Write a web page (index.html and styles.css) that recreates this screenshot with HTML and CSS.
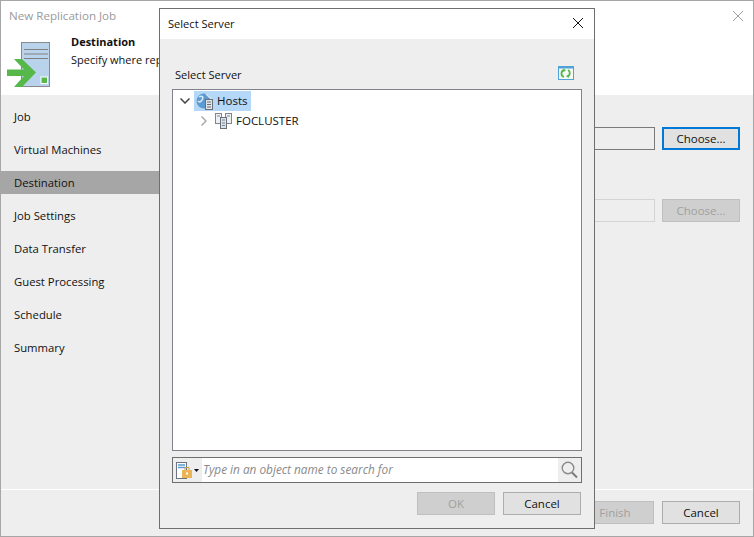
FILE: index.html
```html
<!DOCTYPE html>
<html lang="en">
<head>
<meta charset="utf-8">
<title>New Replication Job</title>
<link rel="stylesheet" href="styles.css">
</head>
<body>
<div class="window">
  <header class="head">
    <div class="title-row">
      <span class="title">New Replication Job</span>
      <svg class="close-x" width="12" height="12" viewBox="0 0 12 12"><path d="M1 1L11 11M11 1L1 11" stroke="#a0a0a0" fill="none"/></svg>
    </div>
    <div class="banner">
      <svg class="logo" width="46" height="48" viewBox="0 0 46 48">
        <rect x="15.5" y="0.5" width="28" height="44" fill="#b9d3ec" stroke="#8a8a8a"/>
        <path d="M18 7.5H42M18 12H42M18 16.5H42" stroke="#808080"/>
        <rect x="35" y="35" width="6.5" height="6.5" fill="#55b848" stroke="#fff"/>
        <path d="M8 17H16L30 30.500L16 45H8L18 34H1V27.500H18Z" fill="#55b848"/>
      </svg>
      <div class="banner-text">
        <div class="banner-title">Destination</div>
        <div class="banner-sub">Specify where replicas should be created</div>
      </div>
    </div>
  </header>
  <div class="body">
    <nav class="nav">
      <div class="nav-item">Job</div>
      <div class="nav-item">Virtual Machines</div>
      <div class="nav-item nav-active">Destination</div>
      <div class="nav-item">Job Settings</div>
      <div class="nav-item">Data Transfer</div>
      <div class="nav-item">Guest Processing</div>
      <div class="nav-item">Schedule</div>
      <div class="nav-item">Summary</div>
    </nav>
    <main class="content">
      <div class="field-row">
        <div class="field"></div>
        <button class="btn btn-focus">Choose...</button>
      </div>
      <div class="field-row field-row-off">
        <div class="field field-off"></div>
        <button class="btn btn-off">Choose...</button>
      </div>
    </main>
  </div>
  <footer class="foot">
    <button class="btn btn-off">Finish</button>
    <button class="btn">Cancel</button>
  </footer>
</div>

<section class="dialog">
  <div class="dlg-head">
    <span class="dlg-title">Select Server</span>
    <svg class="dlg-close" width="12" height="12" viewBox="0 0 12 12"><path d="M1 1L11 11M11 1L1 11" stroke="#111" fill="none"/></svg>
  </div>
  <div class="dlg-body">
    <div class="dlg-label-row">
      <span class="dlg-title">Select Server</span>
      <svg width="16" height="14" viewBox="0 0 16 14">
        <rect x="0.500" y="0.500" width="15" height="13" fill="#f6f8f8" stroke="#4fa3d9"/>
        <path d="M1 1.500H15" stroke="#4fa3d9" stroke-width="2"/>
        <path d="M6.500 4A3.600 3.600 0 0 0 6 11M9.500 10.500A3.600 3.600 0 0 0 10 4" fill="none" stroke="#55b848" stroke-width="1.800"/>
        <path d="M5 2.500L8 4.200L5.500 6ZM11 12L8 10.200L10.500 8.500Z" fill="#55b848"/>
      </svg>
    </div>
    <div class="tree">
      <div class="tree-row">
        <svg class="chev" width="10" height="6" viewBox="0 0 10 6"><path d="M.5.5L5 5L9.500.5" fill="none" stroke="#444" stroke-width="1.500"/></svg>
        <span class="tree-sel">
          <svg width="18" height="18" viewBox="0 0 18 18">
            <circle cx="8" cy="9" r="7.500" fill="#5b9bd0"/>
            <path d="M3 5C6 3 8 5 6 8S3 10 2 9M10 2C12 4 14 5 15 7" fill="none" stroke="#d7e8f6" stroke-width="1.500"/>
            <rect x="9.500" y="7.500" width="7" height="10" fill="#dfe5ea" stroke="#6b6f75"/>
            <path d="M11 10H15M11 12.500H15M11 15H15" stroke="#6b6f75"/>
          </svg>
          <span class="tree-text">Hosts</span>
        </span>
      </div>
      <div class="tree-row tree-child">
        <svg class="chev-r" width="6" height="10" viewBox="0 0 6 10"><path d="M.5.5L5 5L.5 9.500" fill="none" stroke="#aaa" stroke-width="1.500"/></svg>
        <svg width="17" height="16" viewBox="0 0 17 16">
          <rect x="0.500" y="0.500" width="6" height="10" fill="#eef1f4" stroke="#80858b"/>
          <rect x="10.500" y="0.500" width="6" height="10" fill="#eef1f4" stroke="#80858b"/>
          <rect x="5.500" y="4.500" width="6" height="11" fill="#d3e3f2" stroke="#6b6f75"/>
          <path d="M2 3H5M12 3H15M7 7H10M7 10H10M7 12.500H10" stroke="#80858b"/>
        </svg>
        <span class="tree-text">FOCLUSTER</span>
      </div>
    </div>
    <div class="search">
      <div class="search-type">
        <svg width="17" height="17" viewBox="0 0 17 17">
          <rect x="0.500" y="0.500" width="10" height="16" fill="#fff" stroke="#6b7480"/>
          <path d="M2 3H9M2 5.500H9" stroke="#5b9bd0" stroke-width="1.500"/>
          <rect x="6" y="8" width="10" height="8" fill="#eab557"/>
          <path d="M9 8V5.500H13V8" fill="none" stroke="#d09a3c"/>
          <rect x="10" y="10.500" width="2" height="2" fill="#fff"/>
        </svg>
        <svg width="5" height="3" viewBox="0 0 5 3"><path d="M0 0H5L2.500 3Z" fill="#111"/></svg>
      </div>
      <span class="search-hint">Type in an object name to search for</span>
      <div class="search-go">
        <svg width="17" height="18" viewBox="0 0 17 18"><circle cx="7" cy="7" r="5.800" fill="none" stroke="#8a8a8a" stroke-width="1.400"/><path d="M11 11.500L16 16.500" stroke="#7a7a7a" stroke-width="2"/></svg>
      </div>
    </div>
    <div class="dlg-actions">
      <button class="btn btn-off">OK</button>
      <button class="btn">Cancel</button>
    </div>
  </div>
</section>
</body>
</html>
```
FILE: styles.css
```css
* { box-sizing: border-box; }
html, body { margin: 0; height: 100%; }
body {
  width: 754px;
  height: 537px;
  overflow: hidden;
  position: relative;
  font-family: "Open Sans", "Noto Sans", sans-serif;
  font-size: 11.3px;
  color: #111;
  background: #eee;
}
.window {
  width: 754px;
  height: 537px;
  display: flex;
  flex-direction: column;
  border: 1px solid #a6a6a6;
  background: #eee;
}
.head { height: 94px; background: #fff; flex: none; }
.title-row {
  display: flex;
  justify-content: space-between;
  align-items: center;
  padding: 6px 8px 0 8px;
  height: 23px;
}
.title { color: #9a9a9a; font-size: 11.6px; }
.close-x { margin-right: 1px; }
.banner { display: flex; padding-top: 3px; padding-left: 5px; }
.logo { flex: none; margin-top: 15px; margin-bottom: -20px; }
.banner-text { margin-left: 19px; margin-top: 6px; font-size: 11px; }
.banner-title { font-weight: 700; line-height: 18px; }
.banner-sub { line-height: 18px; white-space: nowrap; }
.body { flex: 1; display: flex; min-height: 0; }
.nav { width: 158px; padding-top: 10px; flex: none; }
.nav-item { height: 23px; padding: 0 0 0 13px; line-height: 23px; margin-bottom: 10px; }
.nav-active { background: #a6a6a6; }
.content { flex: 1; padding: 32px 13px 0 0; }
.field-row { display: flex; gap: 7px; height: 23px; }
.field-row-off { margin-top: 49px; }
.field { flex: 1; border: 1px solid #7a7a7a; background: #eee; }
.field-off { border-color: #d4d4d4; }
.btn {
  width: 78px;
  height: 23px;
  flex: none;
  padding: 0;
  font: inherit;
  font-size: 11.5px;
  color: #111;
  background: #e1e1e1;
  border: 1px solid #adadad;
}
.btn-focus { border: 2px solid #0078d7; }
.btn-off { background: #cfcfcf; border-color: #bfbfbf; color: #a0a0a0; }
.foot {
  height: 47px;
  flex: none;
  border-top: 1px solid #fff;
  display: flex;
  justify-content: flex-end;
  gap: 8px;
  padding: 11px 13px 0 0;
}
.dialog {
  position: absolute;
  left: 159px;
  top: 8px;
  width: 436px;
  height: 521px;
  border: 1px solid #6e6e6e;
  background: #eee;
  display: flex;
  flex-direction: column;
}
.dlg-title { font-size: 11.1px; }
.dlg-head {
  height: 30px;
  background: #fff;
  flex: none;
  display: flex;
  justify-content: space-between;
  align-items: center;
  padding: 0 10px 0 8px;
}
.dlg-head .dlg-title, .dlg-close { margin-bottom: 2px; }
.dlg-body { flex: 1; padding: 0 12px; display: flex; flex-direction: column; }
.dlg-label-row {
  height: 50px;
  flex: none;
  display: flex;
  justify-content: space-between;
  align-items: flex-start;
  padding: 27px 8px 0 3px;
  line-height: 18px;
}
.tree {
  height: 362px;
  flex: none;
  border: 1px solid #82828c;
  background: #fff;
  padding: 1px 0 0 7px;
  font-size: 11.5px;
}
.tree-row { display: flex; align-items: center; height: 20px; }
.chev { margin-right: 4px; }
.tree-sel { display: flex; align-items: center; gap: 3px; height: 20px; background: #b5d7f8; padding: 0 0 0 2px; width: 57px; }
.tree-text { margin-bottom: 2px; }
.tree-child { padding-left: 21px; }
.chev-r { margin-right: 8px; }
.tree-child .tree-text { margin-left: 4px; }
.search {
  margin-top: 6px;
  height: 26px;
  flex: none;
  border: 1px solid #6e6e6e;
  background: #fff;
  display: flex;
  align-items: stretch;
}
.search-type { width: 29px; background: #eee; display: flex; align-items: center; gap: 1px; padding: 0 0 0 3px; flex: none; }
.search-hint { flex: 1; font-style: italic; font-size: 11.8px; color: #8a8a8a; line-height: 23px; padding-left: 1px; }
.search-go { width: 23px; background: #eee; flex: none; display: flex; align-items: center; justify-content: center; }
.dlg-actions { margin-top: 9px; display: flex; justify-content: flex-end; gap: 8px; padding-right: 1px; }
```
